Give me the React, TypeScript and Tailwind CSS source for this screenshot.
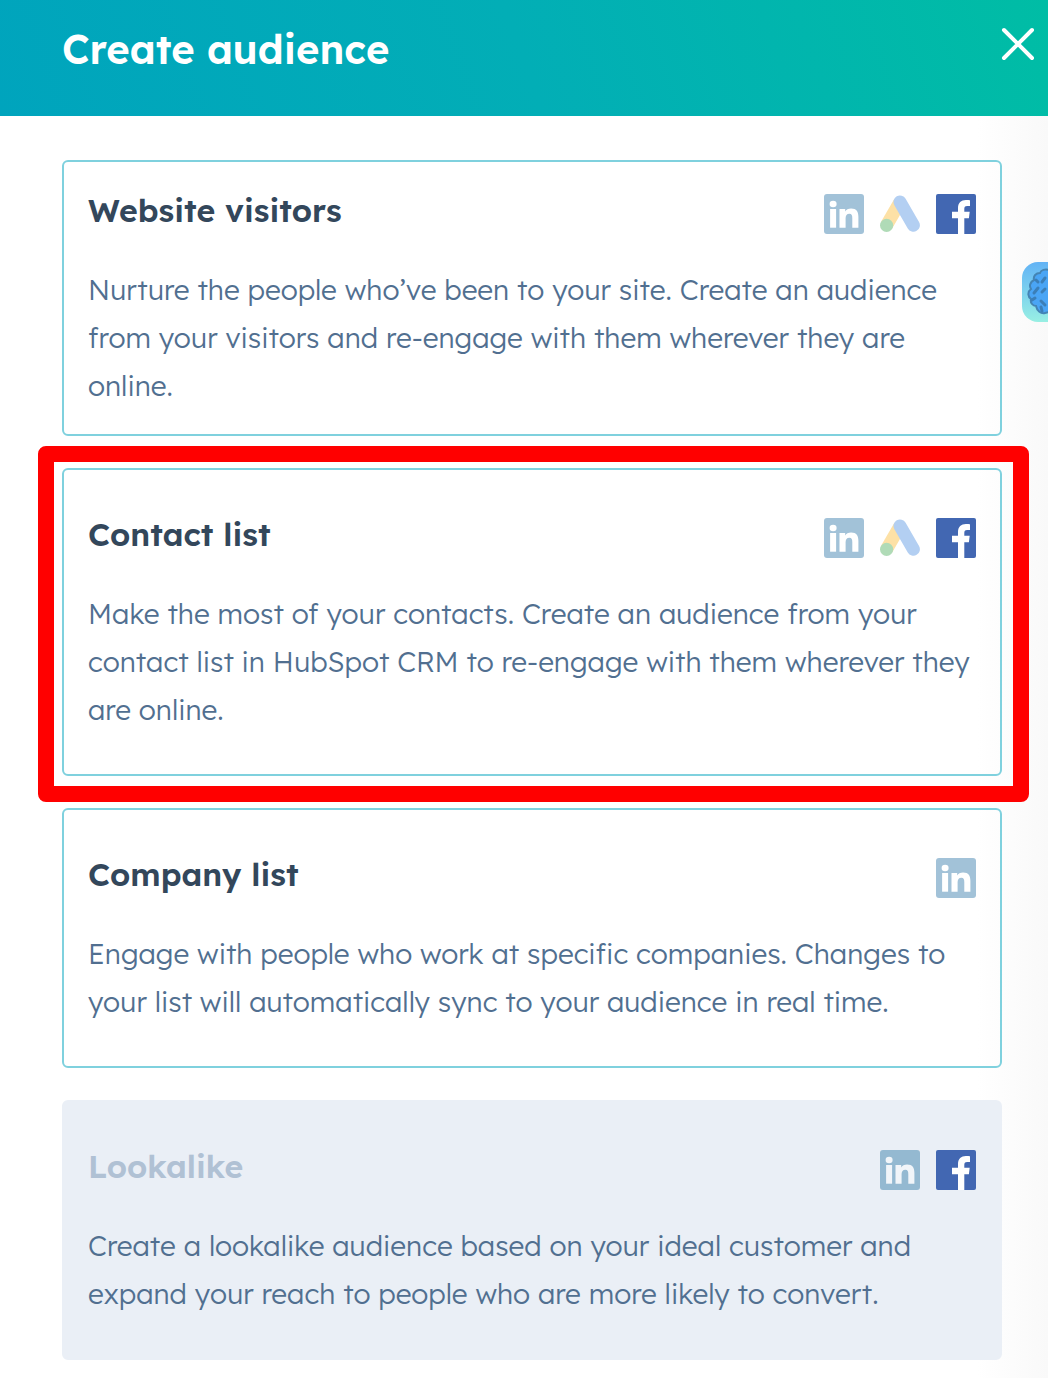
import clsx from "clsx";

type Network = "linkedin" | "google" | "facebook";

type AudienceType = {
  id: string;
  title: string;
  description: string;
  networks: Network[];
  compact?: boolean;
  highlighted?: boolean;
  disabled?: boolean;
};

const audienceTypes: AudienceType[] = [
  {
    id: "website",
    title: "Website visitors",
    description:
      "Nurture the people who’ve been to your site. Create an audience from your visitors and re-engage with them wherever they are online.",
    networks: ["linkedin", "google", "facebook"],
    compact: true,
  },
  {
    id: "contacts",
    title: "Contact list",
    description:
      "Make the most of your contacts. Create an audience from your contact list in HubSpot CRM to re-engage with them wherever they are online.",
    networks: ["linkedin", "google", "facebook"],
    highlighted: true,
  },
  {
    id: "companies",
    title: "Company list",
    description:
      "Engage with people who work at specific companies. Changes to your list will automatically sync to your audience in real time.",
    networks: ["linkedin"],
  },
  {
    id: "lookalike",
    title: "Lookalike",
    description:
      "Create a lookalike audience based on your ideal customer and expand your reach to people who are more likely to convert.",
    networks: ["linkedin", "facebook"],
    disabled: true,
  },
];

function LinkedinIcon({ muted }: { muted?: boolean }) {
  return (
    <svg viewBox="0 0 40 40" className="size-10" role="img" aria-label="LinkedIn">
      <rect width="40" height="40" rx="3" fill={muted ? "#94b9d1" : "#a2c2d8"} />
      <g fill={muted ? "#f1f5f9" : "#ffffff"}>
        <ellipse cx="9.1" cy="10" rx="3.5" ry="3.2" />
        <path d="M6.1 15h6v18.700h-6z" />
        <path d="M15.500 15h5.700v2.400c1-1.700 3-2.900 5.900-2.900 5.500 0 7.300 3.500 7.300 8.400v10.800h-6.100v-9.500c0-2.600-.5-4.400-2.900-4.400-2.700 0-3.800 1.900-3.800 4.400v9.500h-6.100z" />
      </g>
    </svg>
  );
}

function GoogleAdsIcon() {
  return (
    <svg viewBox="0 0 40 40" className="size-10" role="img" aria-label="Google Ads">
      <path d="M6.700 31 20 8" stroke="#fde1a6" strokeWidth="13" />
      <path d="M20 8 33.400 31.200" stroke="#b3cff2" strokeWidth="13" strokeLinecap="round" />
      <circle cx="6.600" cy="31.300" r="6.600" fill="#b0dbb7" />
    </svg>
  );
}

function FacebookIcon() {
  return (
    <svg viewBox="0 0 40 40" className="size-10" role="img" aria-label="Facebook">
      <rect width="40" height="40" rx="2" fill="#4267b2" />
      <path
        d="M22 40V24.300h-6v-6.500h6v-3.800C22 8.700 25.200 6 29.900 6c2 0 3.600.1 4.100.2V12h-2.800c-2.300 0-2.900 1.200-2.900 3v2.800h5.400l-.8 6.500h-4.600V40z"
        fill="#ffffff"
      />
    </svg>
  );
}

function NetworkIcon({ network, muted }: { network: Network; muted?: boolean }) {
  if (network === "linkedin") return <LinkedinIcon muted={muted} />;
  if (network === "google") return <GoogleAdsIcon />;
  return <FacebookIcon />;
}

function AudienceCard({ audience }: { audience: AudienceType }) {
  const { title, description, networks, compact, highlighted, disabled } = audience;

  return (
    <li className="relative">
      <button
        type="button"
        disabled={disabled}
        className={clsx(
          "block w-full rounded-md border-2 px-6 text-left",
          compact ? "py-6" : "py-10",
          disabled ? "border-[#eaeff6] bg-[#eaeff6]" : "border-[#7fd1de]"
        )}
      >
        <span className="flex items-end justify-between">
          <span
            className={clsx(
              "text-[32px] leading-12 font-semibold",
              disabled ? "text-[#b0c1d4]" : "text-[#33475b]"
            )}
          >
            {title}
          </span>
          <span className="flex gap-4">
            {networks.map((network) => (
              <NetworkIcon key={network} network={network} muted={disabled} />
            ))}
          </span>
        </span>
        <span className="mt-8 block text-[28px] leading-12 font-light text-[#516f90]">
          {description}
        </span>
      </button>
      {highlighted && (
        <div className="pointer-events-none absolute -top-[22px] -right-[27px] -bottom-[26px] -left-6 rounded-lg border-[16px] border-[#ff0000]" />
      )}
    </li>
  );
}

function AssistantTab() {
  return (
    <button
      type="button"
      aria-label="Open assistant"
      className="absolute top-[262px] right-0 h-15 w-[26px] overflow-hidden rounded-l-2xl bg-linear-to-b from-[#63b3f5] to-[#98efe3]"
    >
      <svg viewBox="0 0 26 60" className="h-15 w-[26px]" fill="none" aria-hidden="true">
        <path
          d="M27 8c-4-1-8 0-9 3-4 0-7 3-6 7-4 2-5 6-3 9-4 3-3 8 0 10-1 4 2 7 5 7 1 5 5 8 9 7l4-1z"
          fill="#4aa5f5"
          stroke="#4484b4"
          strokeWidth="2"
        />
        <path
          d="m20 20 3-4M12 31l4-5M20 30l3-3M19 39l4 4M10 38l3-2M16 20l-2-2M20 49l-1-4"
          stroke="#3b7fb8"
          strokeWidth="3"
          strokeLinecap="round"
        />
      </svg>
    </button>
  );
}

export default function App() {
  return (
    <div className="relative min-h-screen overflow-hidden bg-white font-[Lexend,Inter,sans-serif]">
      <header className="flex h-29 items-start justify-between bg-linear-70/srgb from-[#00a4bd] via-[#02aeb6] to-[#00bda5] pt-5 pr-3 pl-[62px]">
        <h1 className="text-[40px] leading-[58px] font-semibold text-white">Create audience</h1>
        <button type="button" aria-label="Close" className="mt-1">
          <svg viewBox="0 0 36 40" className="h-10 w-9" aria-hidden="true">
            <path d="m4 6 28 28M32 6 4 34" stroke="#fff" strokeWidth="4" strokeLinecap="round" />
          </svg>
        </button>
      </header>
      <main className="bg-linear-to-l from-[#f9f9f9] to-white to-[70px] pt-11 pr-[46px] pb-[18px] pl-[62px]">
        <ul className="flex flex-col gap-8">
          {audienceTypes.map((audience) => (
            <AudienceCard key={audience.id} audience={audience} />
          ))}
        </ul>
      </main>
      <AssistantTab />
    </div>
  );
}
